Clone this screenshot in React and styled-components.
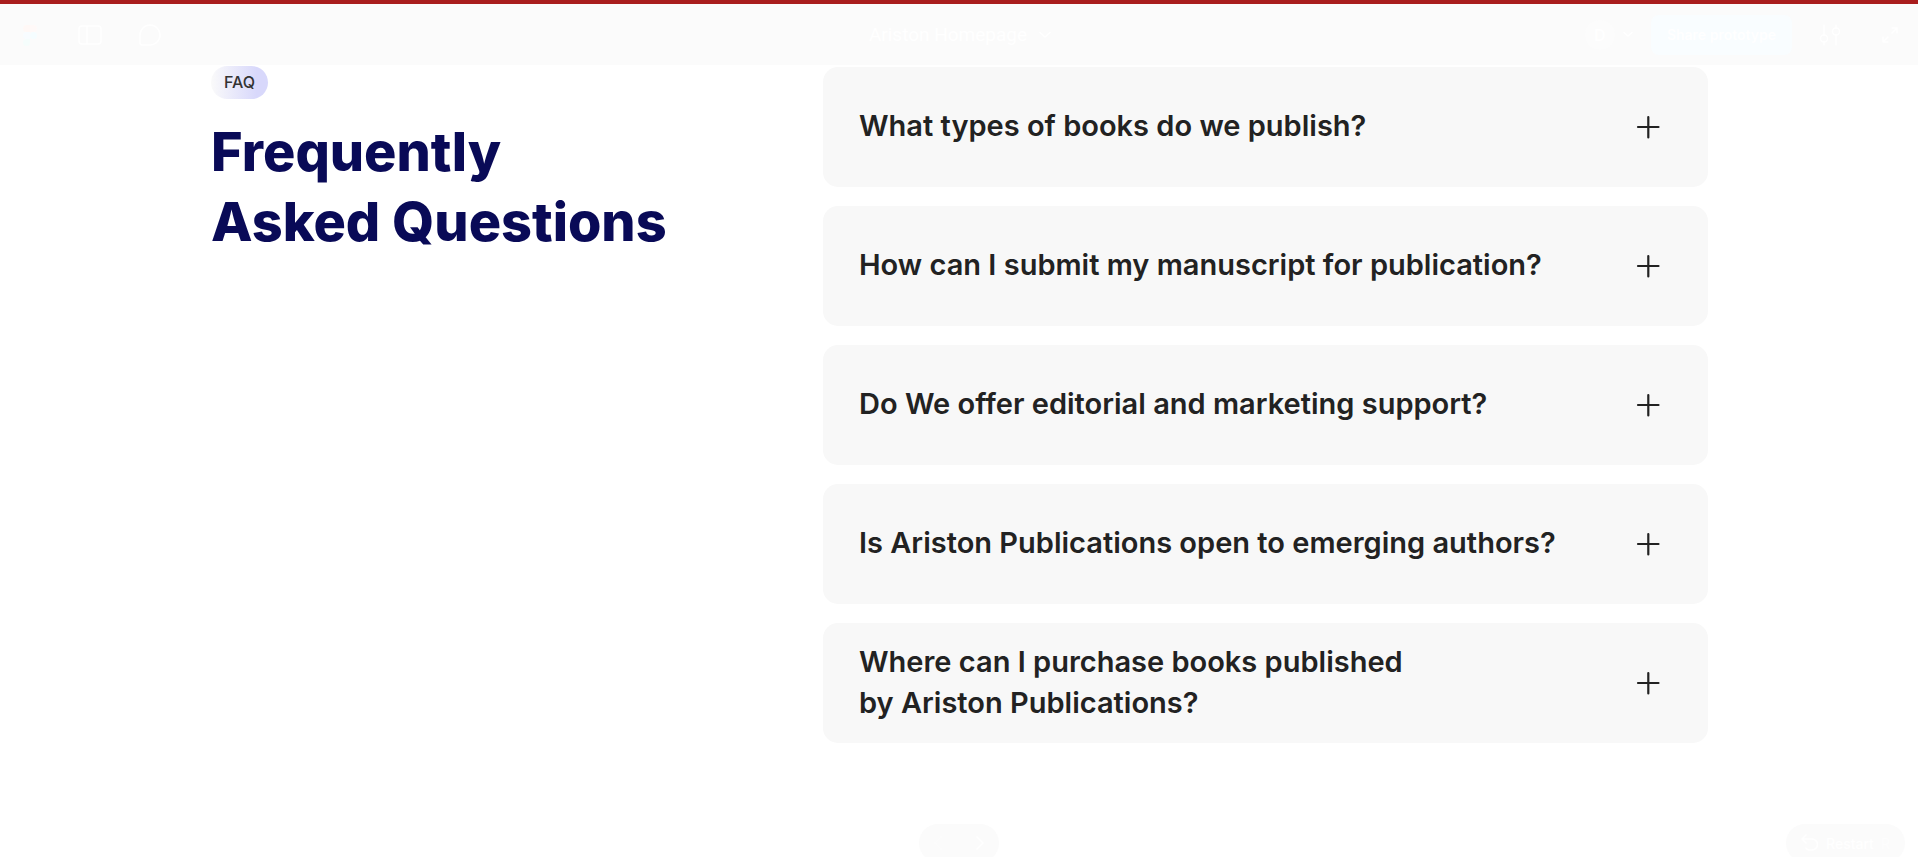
import React, { useState } from "react";
import styled, { createGlobalStyle } from "styled-components";

const GlobalStyle = createGlobalStyle`
  * { box-sizing: border-box; }
  body {
    margin: 0;
    background: #fff;
    color: #222;
    font-family: Inter, "Liberation Sans", sans-serif;
  }
  button { font: inherit; border: 0; cursor: pointer; }
  h1, h2 { margin: 0; }
`;

const Page = styled.div`
  min-height: 100vh;
  display: flex;
  flex-direction: column;
`;

const Toolbar = styled.header`
  height: 65px;
  padding: 0 16px 0 18px;
  border-top: 4px solid #a91d1d;
  background: #fbfbfb;
  color: #fff;
  display: grid;
  grid-template-columns: 1fr auto 1fr;
  align-items: center;
`;

const ToolGroup = styled.div`
  display: flex;
  align-items: center;
  justify-content: ${(p) => (p.$end ? "flex-end" : "flex-start")};
  gap: ${(p) => p.$gap}px;
`;

const IconButton = styled.button`
  padding: 0;
  background: none;
  color: inherit;
  display: flex;
`;

const FileButton = styled(IconButton)`
  align-items: center;
  gap: 12px;
  font-family: Roboto, "Liberation Sans", sans-serif;
  font-size: 19px;
  line-height: 24px;
`;

const AccountButton = styled(IconButton)`
  align-items: center;
  gap: 8px;
  margin-right: 18px;
`;

const Avatar = styled.span`
  width: 30px;
  height: 30px;
  border-radius: 50%;
  background: #fcfcfc;
  display: grid;
  place-items: center;
  font-size: 16px;
  font-weight: 600;
`;

const ShareButton = styled.button`
  height: 40px;
  padding: 0 16px;
  margin-right: 26px;
  border-radius: 8px;
  background: #f9fdff;
  color: #fff;
  font-size: 14px;
  font-weight: 600;
  white-space: nowrap;
`;

const Section = styled.main`
  flex: 1;
  width: 100%;
  max-width: 1498px;
  margin: 0 auto;
  padding-top: 1px;
  display: grid;
  grid-template-columns: 613fr 885fr;
  align-items: start;
`;

const Intro = styled.div`
  padding-left: 1px;
`;

const Badge = styled.span`
  display: inline-block;
  padding: 0 13px;
  border-radius: 17px;
  background: linear-gradient(90deg, #fafafa 0%, #d8d8fb 80%);
  color: #333;
  font-size: 16px;
  font-weight: 500;
  line-height: 33px;
`;

const Title = styled.h1`
  margin-top: 18px;
  color: #090a57;
  font-size: 54px;
  font-weight: 800;
  line-height: 70px;
`;

const QuestionList = styled.div`
  padding-top: 1px;
  display: flex;
  flex-direction: column;
  gap: 19px;
`;

const Question = styled.h2`
  font-size: 29px;
  font-weight: 600;
  line-height: 41px;
`;

const QuestionButton = styled.button`
  width: 100%;
  min-height: 120px;
  padding: 17px 48px 17px 36px;
  border-radius: 15px;
  background: #f8f8f8;
  color: #222;
  text-align: left;
  display: flex;
  align-items: center;
  justify-content: space-between;
`;

const QuestionText = styled.span`
  padding-bottom: 3px;
  white-space: pre-line;
`;

const BottomBar = styled.footer`
  height: 33px;
  padding: 0 13px;
  overflow: hidden;
  color: #fff;
  display: grid;
  grid-template-columns: 1fr auto 1fr;
`;

const Pill = styled.div`
  height: 38px;
  padding: 0 15px;
  border-radius: 19px;
  background: #fbfbfb;
  display: flex;
  align-items: center;
  justify-content: space-between;
  width: ${(p) => p.$width}px;
`;

const RestartButton = styled(Pill).attrs({ as: "button" })`
  grid-column: 3;
  justify-self: end;
  color: #fff;
  font-size: 14px;
  font-weight: 500;
`;

const PagerPill = styled(Pill)`
  grid-column: 2;
`;

const ShortcutKey = styled.span`
  color: #fdfdfd;
`;

const Svg = ({ w, h = w, sw = 1.5, children, ...rest }) => (
  <svg width={w} height={h} viewBox={`0 0 ${w} ${h}`} fill="none" stroke="currentColor"
    strokeWidth={sw} strokeLinecap="round" strokeLinejoin="round" aria-hidden="true" {...rest}>
    {children}
  </svg>
);

const FigmaLogo = () => (
  <Svg w={24} stroke="none">
    <path d="M12 2H8.500a3.500 3.500 0 0 0 0 7H12Z" fill="#fff8f6" />
    <path d="M12 2h3.500a3.500 3.500 0 0 1 0 7H12Z" fill="#fff9f8" />
    <path d="M12 9H8.500a3.500 3.500 0 0 0 0 7H12Z" fill="#f8fcff" />
    <circle cx="15.500" cy="12.500" r="3.500" fill="#f5fdff" />
    <path d="M12 16H8.500a3.500 3.500 0 1 0 3.500 3.500Z" fill="#f5fdfc" />
  </Svg>
);

const PanelIcon = () => (
  <Svg w={24}>
    <rect x="1" y="3" width="22" height="18" rx="3" />
    <path d="M9 3v18" />
  </Svg>
);

const CommentIcon = () => (
  <Svg w={24}>
    <path d="M12 2a10 10 0 0 1 0 20H4a2 2 0 0 1-2-2v-8A10 10 0 0 1 12 2Z" />
  </Svg>
);

const SlidersIcon = () => (
  <Svg w={24}>
    <path d="M6 2v10M6 19v3M18 2v3M18 12v10" />
    <circle cx="6" cy="15.500" r="3.500" />
    <circle cx="18" cy="8.500" r="3.500" />
  </Svg>
);

const ExpandIcon = () => (
  <Svg w={24}>
    <path d="M14 5h5v5M19 5l-5 5M10 19H5v-5M5 19l5-5" />
  </Svg>
);

const PlusIcon = ({ open }) => (
  <Svg w={24} sw={2.2}>
    <path d={open ? "M2 12h20.500" : "M2 12h20.500M12.300 2v20.500"} />
  </Svg>
);

const ChevronIcon = ({ w }) => (
  <Svg w={w} h={8}>
    <path d={`M1 1.500 ${w / 2} ${w / 2} ${w - 1} 1.500`} />
  </Svg>
);

const questions = [
  "What types of books do we publish?",
  "How can I submit my manuscript for publication?",
  "Do We offer editorial and marketing support?",
  "Is Ariston Publications open to emerging authors?",
  "Where can I purchase books published\nby Ariston Publications?",
];

export default function App() {
  const [open, setOpen] = useState(null);
  return (
    <>
      <GlobalStyle />
      <Page>
        <Toolbar>
          <ToolGroup $gap={36}>
            <IconButton aria-label="Figma"><FigmaLogo /></IconButton>
            <IconButton aria-label="Sidebar"><PanelIcon /></IconButton>
            <IconButton aria-label="Comments"><CommentIcon /></IconButton>
          </ToolGroup>
          <FileButton>Ariston Homepage <ChevronIcon w={12} /></FileButton>
          <ToolGroup $end $gap={0}>
            <AccountButton aria-label="Account">
              <Avatar>D</Avatar>
              <ChevronIcon w={10} />
            </AccountButton>
            <ShareButton>Share prototype</ShareButton>
            <ToolGroup $gap={36}>
              <IconButton aria-label="Options"><SlidersIcon /></IconButton>
              <IconButton aria-label="Full screen"><ExpandIcon /></IconButton>
            </ToolGroup>
          </ToolGroup>
        </Toolbar>
        <Section>
          <Intro>
            <Badge>FAQ</Badge>
            <Title>Frequently<br />Asked Questions</Title>
          </Intro>
          <QuestionList>
            {questions.map((text, i) => (
              <Question key={text}>
                <QuestionButton aria-expanded={open === i} onClick={() => setOpen(open === i ? null : i)}>
                  <QuestionText>{text}</QuestionText>
                  <PlusIcon open={open === i} />
                </QuestionButton>
              </Question>
            ))}
          </QuestionList>
        </Section>
        <BottomBar>
          <PagerPill $width={80}>
            <IconButton aria-label="Previous">
              <Svg w={8} h={14} stroke="#fcfcfc"><path d="M7 1 1 7l6 6" /></Svg>
            </IconButton>
            <IconButton aria-label="Next">
              <Svg w={8} h={14}><path d="m1 1 6 6-6 6" /></Svg>
            </IconButton>
          </PagerPill>
          <RestartButton $width={119}>
            <Svg w={18}><path d="M5 1 1 5l4 4M1 5h10a5.500 5.500 0 0 1 0 11H8a4 4 0 0 1-3-2" /></Svg>
            Restart
            <ShortcutKey>R</ShortcutKey>
          </RestartButton>
        </BottomBar>
      </Page>
    </>
  );
}
